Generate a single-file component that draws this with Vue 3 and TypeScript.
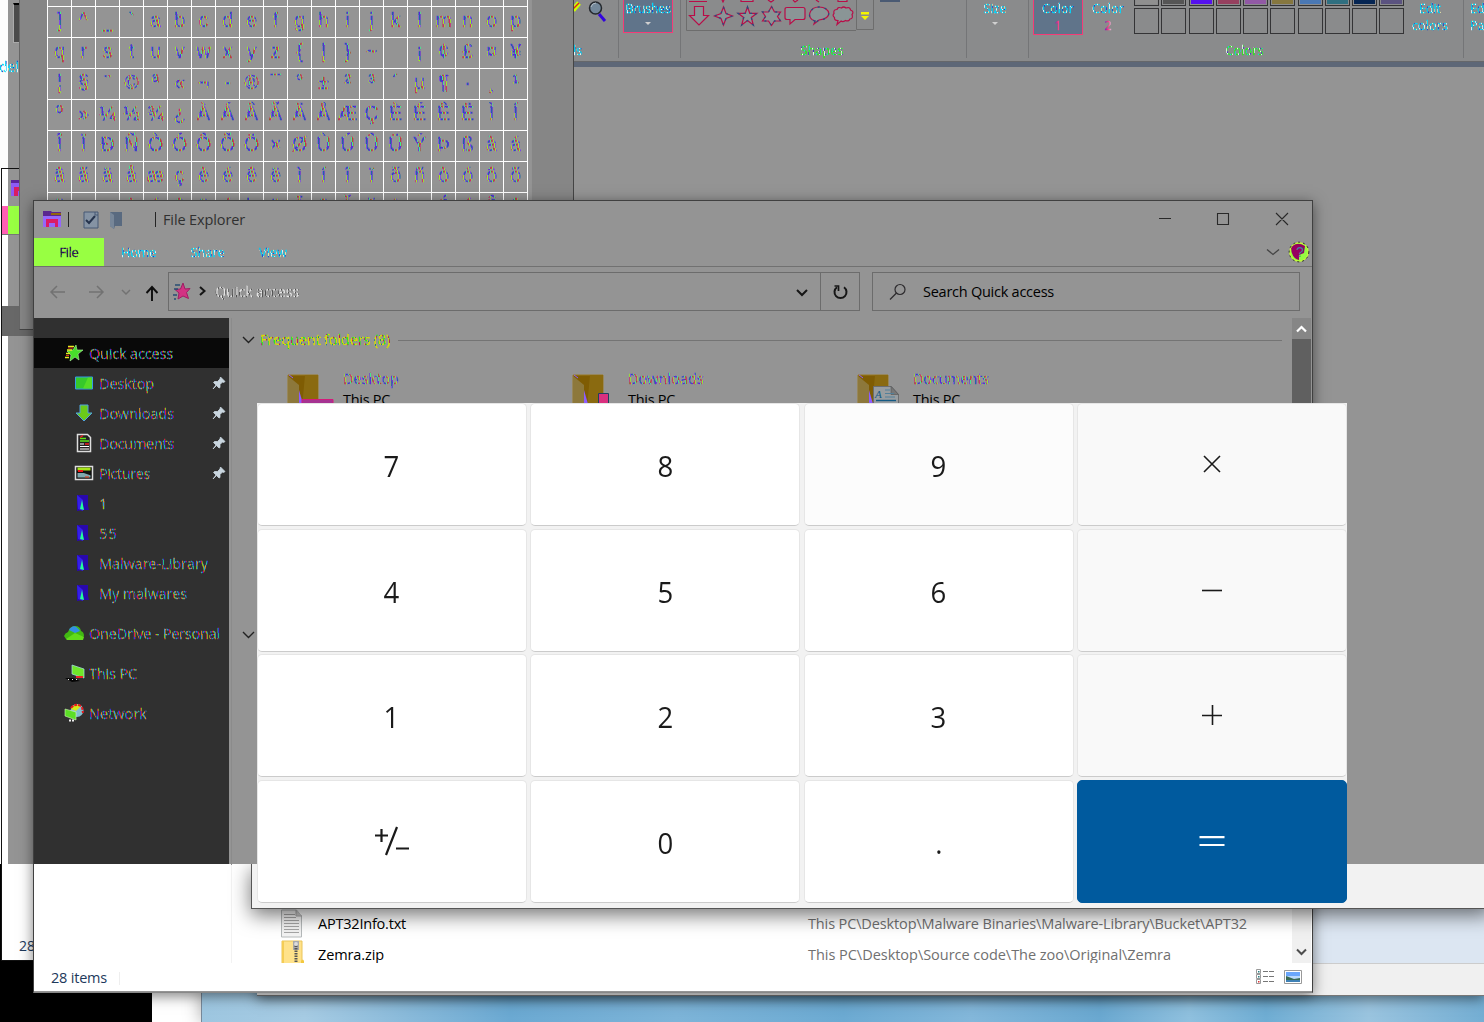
<script setup lang="ts">
import type { Directive } from 'vue'

interface NavItem { label: string; icon: string; width: number; pinned?: boolean; root?: boolean; gap?: boolean }

// Spreads the glyphs of a label so that it fills the given width.
const vFit: Directive<HTMLElement, number> = {
  mounted(el, binding) {
    const n = (el.textContent ?? '').length
    const natural = el.getBoundingClientRect().width
    if (n > 0) el.style.letterSpacing = `${(binding.value - natural) / n}px`
  },
}

const range = (from: number, to: number): number[] => Array.from({ length: to - from + 1 }, (_, i) => from + i)
const glyphs: string[] = [...range(0x5d, 0x7e), ...range(0xa0, 0x109)].map((c) => (c === 0xad ? '-' : String.fromCharCode(c)))

const nav: NavItem[] = [
  { label: 'Quick access', icon: 'star', width: 84, root: true },
  { label: 'Desktop', icon: 'desktop', width: 55, pinned: true },
  { label: 'Downloads', icon: 'down', width: 75, pinned: true },
  { label: 'Documents', icon: 'doc', width: 75, pinned: true },
  { label: 'Pictures', icon: 'pic', width: 51, pinned: true },
  { label: '1', icon: 'folder', width: 8 },
  { label: '55', icon: 'folder', width: 19 },
  { label: 'Malware-Library', icon: 'folder', width: 109 },
  { label: 'My malwares', icon: 'folder', width: 88 },
  { label: 'OneDrive - Personal', icon: 'cloud', width: 131, root: true, gap: true },
  { label: 'This PC', icon: 'pc', width: 48, root: true, gap: true },
  { label: 'Network', icon: 'net', width: 58, root: true, gap: true },
]

const tiles = [
  { name: 'Desktop', kind: 'desktop', width: 56 },
  { name: 'Downloads', kind: 'down', width: 76 },
  { name: 'Documents', kind: 'doc', width: 76 },
]

const files = [
  { name: 'APT32Info.txt', width: 88, path: 'This PC\\Desktop\\Malware Binaries\\Malware-Library\\Bucket\\APT32', pathWidth: 439, zip: false },
  { name: 'Zemra.zip', width: 66, path: 'This PC\\Desktop\\Source code\\The zoo\\Original\\Zemra', pathWidth: 363, zip: true },
]

const palette = ['#8f8f8f', '#555555', '#5511ee', '#96405f', '#9159a5', '#86773f', '#4a78b4', '#2f6f80', '#052553', '#5b5380']

const keys = ['7', '8', '9', '×', '4', '5', '6', '−', '1', '2', '3', '+', '±', '0', '.', '=']
const isOp = (k: string): boolean => ['×', '−', '+'].includes(k)
</script>

<template>
  <div class="screen">
    <div class="sky"></div>
    <div class="black"></div>

    <section class="backleft">
      <span class="ghost noise cool">del</span>
      <i class="device"></i>
    </section>
    <section class="back2">
      <div class="veil"></div>
      <svg class="b2icon" width="10" height="17"><path d="M0 3h10v14H0z" fill="#8d5cf5" /><path d="M0 1h10v3H0z" fill="#5b249c" /><path d="M3 17V8h7v4H7v5z" fill="#d91c62" /></svg>
      <div class="b2tab"></div>
      <div class="b2sel"></div>
      <span class="b2count">28</span>
    </section>

    <section class="paint">
      <div class="ribbon">
        <div class="group g1">
          <div class="gbody">
            <svg width="46" height="24" viewBox="573 0 46 24"><path d="M573 10l6-7" stroke="#ccff00" stroke-width="5" /><path d="M573 9l6-6" stroke="#e02020" stroke-width="1.5" /><path d="M599 14l6 7" stroke="#3305dd" stroke-width="3" /><circle cx="595.500" cy="8" r="6" fill="#73889a" stroke="#24282d" stroke-width="1.5" /><path d="M591 7q1-4 5-4" stroke="#b2bdc5" fill="none" /></svg>
          </div>
          <b class="noise cool lab">ls</b>
        </div>
        <div class="group g2">
          <div class="gbody"><div class="rbtn on"><span v-fit="45" class="noise cool">Brushes</span><i class="tri"></i></div></div>
        </div>
        <div class="group g3">
          <div class="gbody">
            <svg width="285" height="34" viewBox="681 0 285 34" fill="none">
              <path d="M686.500 0v30.500H856" stroke="#6d6d6d" />
              <path d="M856.500 0v29.500h17V0" stroke="#6d6d6d" />
              <g stroke="#b80d48" stroke-width="1.200" fill="#8a9596">
                <path d="M689 1.500h18M722 0l1 2 1-2M741 0v1.500h12V0M768 0l3 2 3-2M793 0l2 2 3-2M816 0l3 2M838 0v1.500h9V0" />
                <path d="M694.500 6.500h9v9h5l-9.500 9.500-9.500-9.500h5z" />
                <path d="M723.500 7l2.500 6.500 6.500 2.500-6.500 2.500-2.500 6.500-2.500-6.500-6.500-2.500 6.500-2.500z" />
                <path d="M747.500 7l2.300 6.300h7l-5.500 4.200 2 7.500-5.800-4.500-5.800 4.500 2-7.500-5.500-4.200h7z" />
                <path d="M771.500 6.500l3 5.500h6l-3 4.500 3 4.500h-6l-3 4.500-3-4.500h-6l3-4.500-3-4.500h6z" />
                <path d="M787 7.500h16q2 0 2 2v8q0 2-2 2h-8l-5 4.500v-4.500h-3q-2 0-2-2v-8q0-2 2-2z" />
                <path d="M815 21c-10-3-5-14 4-14 12 0 14 12 0 13l-5 4z" />
                <path d="M838 20.500q-4 0-3.500-3-2.500-2-.5-4-1-4 3-4 1-3 4.500-1.500 2-2 4.500 0 4-1.500 4.500 2 4 1.500 1.500 4.500 1.500 4-2 4.500-1.500 3-4.500 1.500-3 2-4.500.500l-4 3.500z" />
              </g>
              <g stroke="#255083" stroke-width="1.300" stroke-dasharray="2 5"><path d="M723.500 7l2.500 6.500 6.500 2.500-6.500 2.500-2.500 6.500-2.500-6.500-6.500-2.500 6.500-2.500zM747.500 7l2.300 6.300h7l-5.500 4.200 2 7.500-5.800-4.500-5.800 4.500 2-7.500-5.500-4.200h7zM771.500 6.500l3 5.500h6l-3 4.500 3 4.500h-6l-3 4.500-3-4.500h-6l3-4.500-3-4.500h6zM815 21c-10-3-5-14 4-14 12 0 14 12 0 13l-5 4z" /></g>
              <path d="M861 12h8v2.500h-8zM861 16h8l-4 4z" fill="#f4f400" />
              <path d="M880 0h20v2h-20z" fill="#4a5a73" />
            </svg>
          </div>
          <b v-fit="43" class="noise green lab nudge">Shapes</b>
        </div>
        <div class="group g4">
          <div class="gbody"><div class="rbtn"><span v-fit="23" class="noise cool">Size</span><i class="tri"></i></div></div>
        </div>
        <div class="group g5">
          <div class="gbody">
            <div class="rbtn on tall"><span v-fit="32" class="noise cool">Color</span><span class="noise warm">1</span></div>
            <div class="rbtn tall"><span v-fit="32" class="noise cool">Color</span><span class="noise warm">2</span></div>
            <div class="palette">
              <i v-for="(c, i) in palette" :key="i" class="sw top"><em :style="{ background: c }"></em></i>
              <i v-for="n in 10" :key="'e' + n" class="sw"></i>
            </div>
            <div class="rbtn tall edit"><span v-fit="22" class="noise cool">Edit</span><span v-fit="36" class="noise cool">colors</span></div>
          </div>
          <b v-fit="38" class="noise green lab nudge">Colors</b>
        </div>
        <div class="group g6"><div class="gbody"><div class="rbtn tall left"><span class="noise cool">Edit</span><span class="noise cool">Paint</span></div></div></div>
      </div>
      <div class="strip"></div>
      <div class="canvas"></div>
      <div class="pblue"></div>
      <div class="pstatus"></div>
    </section>

    <section class="charmap">
      <div class="chars"><span v-for="(g, i) in glyphs" :key="i" class="cell"><span class="noise glyph">{{ g }}</span></span></div>
      <div class="chscroll"></div>
    </section>

    <section class="explorer">
      <header class="title">
        <svg class="tico" width="19" height="17" viewBox="0 0 19 17"><path d="M0 3h18v13H0z" fill="#9567fa" /><path d="M0 0h8l1 1h9v4H0z" fill="#5a278e" /><path d="M8 2h10v2H8z" fill="#91650d" /><path d="M3 16V8h12v8h-3v-4H6v4z" fill="#da1b65" /></svg>
        <i class="bar b1"></i>
        <svg class="tdoc" width="16" height="18" viewBox="0 0 16 18"><path d="M1 1h14v16H1z" fill="#8593a4" stroke="#465874" /><path d="M12 1v3h3" stroke="#465874" fill="none" /><path d="M3 9l3 3 6-7" fill="none" stroke="#26344d" stroke-width="2" /></svg>
        <svg class="tfold" width="14" height="18" viewBox="0 0 14 18"><path d="M0 1h12v14H5l-1 3-4-3z" fill="#596a80" /><path d="M0 1l4 3v14l-4-3z" fill="#778698" /></svg>
        <i class="bar b2"></i>
        <span v-fit="82" class="caption">File Explorer</span>
        <svg class="wbtn" width="140" height="20" viewBox="0 0 140 20" fill="none" stroke="#292929" stroke-width="1.100"><path d="M4 9.500h12M62.500 4.500h11v11h-11zM121 4l12 12M133 4l-12 12" /></svg>
      </header>
      <nav class="tabs">
        <span class="tab file"><span v-fit="19" class="noise dark">File</span></span>
        <span v-fit="35" class="noise cool t">Home</span>
        <span v-fit="34" class="noise cool t">Share</span>
        <span v-fit="28" class="noise cool t">View</span>
        <svg class="help" width="46" height="24" viewBox="0 0 46 24"><path d="M1 9.500l6 5 6-5" fill="none" stroke="#444" stroke-width="1.300" /><circle cx="33" cy="12" r="9.500" fill="#95fb42" /><path d="M25 7q6-6 14-1l-1 7-5 2v5q-8-2-8-13z" fill="#970060" /><circle cx="33" cy="12" r="9.300" fill="none" stroke="#d8ff30" /><circle cx="33" cy="12" r="9.800" fill="none" stroke="#22252a" stroke-dasharray="2 3" /><text x="30" y="17" class="q">?</text></svg>
      </nav>
      <div class="address">
        <svg width="134" height="50" viewBox="34 267 134 50" fill="none">
          <path d="M65 292H51m6-6l-6 6 6 6M89 292h14m-6-6l6 6-6 6M122 290l4 4 4-4" stroke="#727272" stroke-width="1.500" />
          <path d="M152 301v-14m-5.500 6l5.500-6 5.500 6" stroke="#0d0d0d" stroke-width="1.900" />
        </svg>
        <div class="abox">
          <svg width="44" height="36" viewBox="169 274 44 36"><path d="M183 283l2 6 5-.5-3.500 4 2 6-5.500-2.500-5 3 1-6-4-3.500 5.500-.5z" fill="#d23283" stroke="#9e1f63" /><path d="M175 285h5M174 289h4M173 295h4M174 299h2" stroke="#274c73" stroke-width="1.300" /><path d="M200 287l4.500 4-4.500 4" fill="none" stroke="#151515" stroke-width="2" /></svg>
          <span v-fit="84" class="noise pale">Quick access</span>
          <svg class="adown" width="14" height="12"><path d="M2 4l5 5 5-5" fill="none" stroke="#161616" stroke-width="2" /></svg>
          <span class="refresh"><svg width="18" height="18" viewBox="0 0 18 18" fill="none" stroke="#161616" stroke-width="2"><path d="M13 4.200a6 6 0 1 1-7 0" /><path d="M3.500 3h4v5" stroke-width="1.700" /></svg></span>
        </div>
        <div class="search">
          <svg width="18" height="18" viewBox="0 0 18 18" fill="none" stroke="#2d2b2e" stroke-width="1.200"><circle cx="11" cy="6.500" r="5" /><path d="M7.500 10L1 16.500" /></svg>
          <span v-fit="131">Search Quick access</span>
        </div>
      </div>
      <div class="body">
        <aside class="side">
          <div v-for="it in nav" :key="it.label" class="row" :class="{ root: it.root, gap: it.gap, sel: it.icon === 'star' }">
            <svg class="ico" width="22" height="22" viewBox="0 0 22 22">
              <g v-if="it.icon === 'star'"><path d="M13 3l1 5 6 0-5 4 1 6-4-3-5 4 1-6-4-4 6-1z" fill="#47df2b" stroke="#b3f7a0" stroke-width=".6" /><path d="M5 4.500h6M4 8h5M3 11.500h4M2 15.500h4" stroke="#e5ed20" stroke-width="1.300" /><path d="M5 6h5M3 13.500h3" stroke="#e43322" /></g>
              <g v-else-if="it.icon === 'desktop'"><path d="M2.500 5h17v12h-17z" fill="#36c82b" stroke="#359be8" /><path d="M10 16.500l5-11h4v11z" fill="#55db26" /></g>
              <g v-else-if="it.icon === 'down'"><path d="M7 3h8v8h4l-8 8-8-8h4z" fill="#6bcb18" stroke="#4ea4df" /></g>
              <g v-else-if="it.icon === 'doc'"><path d="M4.500 2.500h10l3 3v14h-13z" fill="#222" stroke="#ddd" stroke-width="1.500" /><path d="M7 6.500h6M7 9h9" stroke="#5ee218" stroke-width="1.500" /><path d="M7 12h4M7 14.500h9M7 17h9" stroke="#fff" /><path d="M7 5.500l3-2M12 12h4" stroke="#e22" stroke-width="1.500" /></g>
              <g v-else-if="it.icon === 'pic'"><path d="M2.500 4.500h17v13h-17z" fill="#111" stroke="#ddd" stroke-width="1.500" /><path d="M4.500 7h13" stroke="#a8e61b" stroke-width="3" /><path d="M5 9h5" stroke="#f01515" stroke-width="2" /><path d="M4.500 11h13v4.500h-13z" fill="#80a8ae" /><path d="M8 10l10 3.500V10z" fill="#111" /><path d="M12 15h4" stroke="#e31" /></g>
              <g v-else-if="it.icon === 'folder'"><path d="M4 3h11v11l1 4h-5l-7 1z" fill="#2908ac" /><path d="M4 3l6 5v11l-5-2z" fill="#3420e9" /><path d="M9 8l2 10-4-1z" fill="#23ff99" /></g>
              <g v-else-if="it.icon === 'cloud'"><path d="M1 14q1-3 4-4 2-6 7-6 5 0 6 5 3 1 3 5l-2 3H3z" fill="#41b912" /><path d="M6 8q5-8 11 1l-5 2z" fill="#338ee5" /><path d="M3 17l9-6 9 4-1 3H4z" fill="#62dc1b" /></g>
              <g v-else-if="it.icon === 'pc'"><path d="M9 3l12 4v9l-12-4z" fill="#70e72a" stroke="#a9e2ee" stroke-width=".7" /><path d="M13 15h7" stroke="#ef2029" stroke-width="2" /><path d="M2 16h8l7 3-8 1z" fill="#050505" /><path d="M5 17.500h10" stroke="#eee" stroke-dasharray="1 3" /></g>
              <g v-else><circle cx="14" cy="8.500" r="6.500" fill="#85bed0" /><path d="M8 7q4-7 10-3l-5 5z" fill="#d3ed16" /><path d="M8 6q4-5 10-2m1 1l1 6" stroke="#e6191d" stroke-width="2" fill="none" stroke-dasharray="3 1" /><path d="M2 7l11 3v8L2 14z" fill="#5bde26" stroke="#d3f6ba" stroke-width=".6" /><path d="M6 18.500h6" stroke="#eee" stroke-dasharray="2 1" stroke-width="2" /></g>
            </svg>
            <span v-fit="it.width" class="noise neon">{{ it.label }}</span>
            <svg v-if="it.pinned" class="pin" width="14" height="14" viewBox="0 0 14 14"><path d="M8.500 1l4.500 4.500-1.500 1-1-.5-2.500 2.500v3l-1 .5-2.500-2.500L1 13l3-4L1.500 6.500l1-1h3L8 3z" fill="#c9d6df" stroke="#c9d6df" stroke-width=".8" /></svg>
          </div>
        </aside>
        <main class="content">
          <div class="ghead"><svg width="13" height="12"><path d="M1 3l5.500 5.500L12 3" fill="none" stroke="#222" stroke-width="1.400" /></svg><span v-fit="130" class="noise olive">Frequent folders (8)</span><i></i></div>
          <div class="tiles">
            <div v-for="t in tiles" :key="t.name" class="tile">
              <svg width="56" height="46" viewBox="0 0 56 46"><path d="M1 2h30v44H1z" fill="#7f5c03" stroke="#9a7a24" /><path d="M18 2h13v44H14z" fill="#8a6a10" /><path d="M1 3l11 9v34H1z" fill="#8d783b" /><path d="M2 2l4 3" stroke="#8d5cff" /><path d="M12 17l4 14v15h-4z" fill="#8d5cff" />
                <path v-if="t.kind === 'desktop'" d="M15 26.500h31V46H15z" fill="#a63392" stroke="#d5197b" />
                <path v-else-if="t.kind === 'down'" d="M26.500 20.500h10V46h-10z" fill="#d9307f" stroke="#20405f" />
                <g v-else><path d="M16.500 13.500h18l7 8V46h-25z" fill="#989da0" stroke="#6a6d70" /><path d="M34 13.500v8h7.500z" fill="#777" stroke="#555" stroke-width=".6" /><path d="M28 17h5M28 20.500h9M28 24h10" stroke="#53809a" /><path d="M19 27.500h20" stroke="#145a84" stroke-width="1.400" /><path d="M31 31h9" stroke="#f0387a" stroke-width="2" /><text x="18" y="25" class="aa">A</text></g>
              </svg>
              <div class="tt"><span v-fit="t.width" class="noise tname">{{ t.name }}</span><br /><span v-fit="47" class="sub">This PC</span></div>
            </div>
          </div>
          <div class="ghead g2nd"><svg width="13" height="12"><path d="M1 3l5.500 5.500L12 3" fill="none" stroke="#222" stroke-width="1.400" /></svg></div>
          <div class="spacer"></div>
          <div v-for="f in files" :key="f.name" class="frow">
            <svg v-if="!f.zip" width="24" height="29" viewBox="0 0 24 29"><path d="M1.500 1h15l5 6v21h-20z" fill="#f3f3f3" stroke="#b5b9ba" /><path d="M16 1v6h6" fill="#ccc" stroke="#aaa" /><path d="M4 5.500h11M4 8.500h12M4 11.500h15M4 14.500h15M4 17.500h15M4 20.500h15M4 23.500h15" stroke="#a5a5a5" /></svg>
            <svg v-else width="24" height="29" viewBox="0 0 24 29"><path d="M2 1h20v28H2z" fill="#ffe28a" stroke="#eac55a" /><path d="M2 1h2v28H2z" fill="#f5cd55" /><path d="M13 1h6v9h-6z" fill="#aaa" /><path d="M16 3v26" stroke="#555" stroke-width="3" stroke-dasharray="1.500 1" /><circle cx="16" cy="4" r="2" fill="#ddd" /><path d="M21 29v-8q2-3 3 0v8z" fill="#f3c83f" /></svg>
            <span class="fname"><span v-fit="f.width">{{ f.name }}</span></span>
            <span v-fit="f.pathWidth" class="path">{{ f.path }}</span>
          </div>
        </main>
        <div class="scroll">
          <div class="sup"><svg width="14" height="10"><path d="M3 7.500L7.500 3 12 7.500" fill="none" stroke="#fff" stroke-width="2.200" /></svg></div>
          <div class="thumb"></div>
          <div class="sdown"><svg width="14" height="10"><path d="M3 2.500L7.500 7 12 2.500" fill="none" stroke="#4d4d4d" stroke-width="2" /></svg></div>
        </div>
      </div>
      <footer class="status">
        <span v-fit="56">28 items</span><i></i>
        <svg width="48" height="18" viewBox="0 0 48 18"><path d="M1.500 1.500h4v4h-4zM1.500 6.500h4v4h-4zM1.500 11.500h4v4h-4z" fill="#fff" stroke="#999" /><path d="M3 3h1.500v1.500H3zM3 8h1.500v1.500H3z" fill="#277f82" /><path d="M3 13h1.500v1.500H3z" fill="#d33" /><path d="M8 3.500h11M8 8.500h11M8 13.500h11" stroke="#777" stroke-dasharray="5 1" /><path d="M29.500 2.500h17v13h-17z" fill="#fff" stroke="#999" /><path d="M31 4h14v5H31z" fill="#6aa6fb" /><path d="M31 8h14v6H31z" fill="#b9d8fc" /><path d="M31 8l8 3 6-1v2l-14 1z" fill="#3a6a53" /><path d="M31 12h14v2H31z" fill="#3f81b5" /></svg>
      </footer>
    </section>

    <section class="calcbase"></section>
    <section class="calc">
      <button v-for="(k, i) in keys" :key="k" type="button" :class="{ op: isOp(k), eq: k === '=', soft: i === 2, first: i % 4 === 0 }">
        <svg v-if="k === '×'" class="up" width="20" height="20"><path d="M2 2l16 16M18 2L2 18" /></svg>
        <svg v-else-if="k === '−'" class="up" width="22" height="20"><path d="M1 10.500h20" /></svg>
        <svg v-else-if="k === '+'" class="up" width="22" height="22"><path d="M1 11.500h20M11.500 1v20" /></svg>
        <svg v-else-if="k === '±'" class="pm" width="36" height="30"><path d="M1 9.500h13M7.500 3v13M12 29L23 1M22 22.500h13" /></svg>
        <svg v-else-if="k === '='" class="eqi" width="26" height="12"><path d="M.5 2.200h25M.5 10h25" /></svg>
        <span v-else>{{ k }}</span>
      </button>
    </section>
  </div>
</template>

<style>
html, body { margin: 0; background: #fff; overflow: hidden; }
</style>

<style scoped>
.screen { position: relative; width: 1484px; height: 1022px; overflow: hidden; background: #fff; font: 15px/20px "Open Sans", "Noto Sans", sans-serif; color: #000; }
.screen *, .screen { box-sizing: border-box; }
svg { display: block; flex: none; }
section { position: absolute; }
i, em, b { font-style: normal; font-weight: 400; }
span { white-space: nowrap; }
.noise { display: inline-block; color: transparent; background-clip: text; -webkit-background-clip: text; -webkit-text-stroke: .35px transparent;
  background-image: repeating-linear-gradient(78deg, #5b20e0 0 1.300px, #3df08e 1.300px 2.200px, #a8522a 2.200px 3px, #d02470 3px 4px, #9cf020 4px 5px, #7a40f0 5px 6px, #1f68a0 6px 7px); }
.cool { background-image: repeating-linear-gradient(78deg, #00d8ff 0 2px, #f0f8fa 2px 3px, #00c8f0 3px 4.500px, #2838d0 4.500px 5px, #e8e8a8 5px 5.600px); }
.green { background-image: repeating-linear-gradient(78deg, #20f010 0 1.700px, #f4fff4 1.700px 2.700px, #3d20d0 2.700px 3.200px, #28f030 3.200px 4.700px, #10d8e0 4.700px 5.500px); }
.warm { background-image: linear-gradient(90deg, #4a18d8, #ff2f7c, #e0e0f0); }
.dark { background-image: repeating-linear-gradient(68deg, #1f1465 0 2px, #7a204d 2px 3px, #1e7a50 3px 4px, #24242c 4px 5px); }
.pale { background-image: repeating-linear-gradient(84deg, #e8e8e8 0 1.300px, #4e4e4e 1.300px 2.300px, #bdbdbd 2.300px 3.300px); }
.olive { background-image: repeating-linear-gradient(78deg, #d8e000 0 2px, #c01058 2px 2.700px, #20f018 2.700px 4px, #d8d800 4px 5.600px, #107898 5.600px 6px); }
.neon { background-image: repeating-linear-gradient(78deg, #e09a28 0 1px, #4a3090 1px 2px, #22c890 2px 3px, #3a30e8 3px 4px, #dd2044 4px 5px, #8cd420 5px 6px, #3a98e8 6px 7px); }

.sky { position: absolute; left: 201px; top: 990px; width: 1283px; height: 32px; border-left: 1px solid #789; background: linear-gradient(90deg, #9dc6e0 0, #a6cbe3 8%, #8dbcdb 15%, #6ba9d2 24%, #7db4d8 37%, #6caad2 50%, #83b7da 60%, #6aa8d0 70%, #8fc0de 77%, #6fadd3 83%, #9ac4df 91%, #74aed3 100%); box-shadow: 0 0 18px rgba(0, 0, 0, .35); }
.black { position: absolute; left: 0; top: 864px; width: 152px; height: 158px; background: #000; }
.backleft { left: 0; top: 0; width: 20px; height: 864px; background: linear-gradient(90deg, #fcfcfc 8px, #949494 8px); overflow: hidden; }
.ghost { margin: 57px 0 0 -1px; font-size: 14px; }
.device { position: absolute; left: 13px; top: 3px; width: 8px; height: 40px; background: #4a4a4a; border: 1px solid #aaa; border-top: 2px solid #000; }
.back2 { left: 1px; top: 168px; width: 60px; height: 793px; border: 1px solid #111; background: #fff; }
.veil { position: absolute; left: 6px; top: 0; width: 54px; height: 695px; background: #949494; }
.b2icon { position: absolute; left: 9px; top: 10px; }
.b2tab { position: absolute; left: 0; top: 37px; width: 60px; height: 29px; background: linear-gradient(90deg, #ff5fb4 6px, #98ff42 6px); border-bottom: 1px solid #777; }
.b2sel { position: absolute; left: 0; top: 137px; width: 60px; height: 30px; background: #686868; }
.b2count { position: absolute; left: 17px; top: 767px; font-size: 14px; color: #1e395b; }

.paint { left: 257px; top: 0; padding-left: 316px; width: 1227px; height: 996px; background: #949494; border-bottom: 1px solid #777; display: flex; flex-direction: column; box-shadow: 0 3px 12px rgba(0, 0, 0, .5); }
.ribbon { height: 61px; flex: none; display: flex; background: #8a8b8c; overflow: hidden; font-size: 12.500px; line-height: 17px; }
.group { height: 58px; flex: none; position: relative; display: flex; flex-direction: column; align-items: center; border-right: 1px solid #747577; }
.gbody { height: 42px; flex: none; display: flex; align-items: flex-start; width: 100%; }
.lab { font-size: 12.500px; line-height: 17px; }
.nudge { margin-right: 3px; }
.g1 { width: 46px; align-items: flex-start; } .g2 { width: 62px; } .g3 { width: 286px; } .g4 { width: 62px; } .g5 { width: 435px; } .g6 { width: 40px; border: 0; }
.rbtn { width: 50px; height: 33px; display: flex; flex-direction: column; align-items: center; flex: none; }
.g2 .rbtn { margin-left: 4px; } .g4 .rbtn { margin-left: 3px; }
.rbtn.on { background: #60748a; border: 1px solid #f53b77; border-top: 0; }
.rbtn.tall { height: 35px; }
.g5 .rbtn:first-child { margin-left: 4px; }
.g5 .edit { margin: 0 8px 0 auto; }
.rbtn.left { align-items: flex-start; padding-left: 6px; }
.tri { margin-top: 5px; border: 3px solid transparent; border-top-color: #d0d0d0; border-bottom: 0; }
.palette { display: grid; grid-template-columns: repeat(10, 25px); column-gap: 2.250px; row-gap: 2px; margin-left: 1px; }
.sw { height: 26px; border: 1px solid #343436; }
.sw.top { height: 6px; border-top: 0; padding: 0 1px 1px; }
.sw em { display: block; height: 4px; }
.strip { height: 6px; flex: none; background: #5d6777; border-top: 1px solid #65676a; }
.canvas { height: 797px; flex: none; }
.pblue { height: 100px; flex: none; background: #dce6f2; border-bottom: 1px solid #ccc; }
.pstatus { flex: 1; background: #f0f0f0; margin-left: -316px; }

.charmap { left: 19px; top: -3px; width: 555px; height: 333px; background: #868686; border: 1px solid #454545; border-top: 0; border-left-color: #666; display: flex; overflow: hidden; }
.chars { margin: 3px 0 0 27px; padding-top: 6px; width: 481px; flex: none; display: grid; grid-template-columns: repeat(20, 24px); grid-auto-rows: 31px; border-left: 1px solid #fff; align-content: start; background: repeating-linear-gradient(90deg, #949494 0 23px, #fff 23px 24px); }
.cell { background: #949494; border: 1px solid #fff; border-width: 1px 1px 0 0; display: flex; justify-content: center; font: 20px/27px "Liberation Sans", Arial, sans-serif; }
.glyph { height: 30px; }
.chscroll { width: 4px; border-right: 1px solid #939393; background: #949494; }

.explorer { left: 33px; top: 200px; width: 1280px; height: 793px; border: 1px solid #404040; border-bottom-color: #888; background: #949494; display: flex; flex-direction: column; box-shadow: 0 3px 13px rgba(0, 0, 0, .5); }
.title { height: 37px; display: flex; align-items: center; flex: none; }
.tico { margin-left: 9px; } .bar { width: 1px; height: 15px; background: #242424; } .b1 { margin-left: 6px; }
.tdoc { margin-left: 14px; } .tfold { margin-left: 11px; } .b2 { margin-left: 31px; }
.caption { margin-left: 7px; color: #303030; font-size: 14.500px; }
.wbtn { margin: -2px 17px 0 auto; }
.tabs { height: 29px; flex: none; display: flex; align-items: center; border-bottom: 1px solid #717171; font-size: 13px; }
.file { width: 70px; align-self: stretch; background: #98ff42; display: flex; align-items: center; justify-content: center; margin-right: 17px; }
.t { margin-right: 34.500px; }
.help { margin-left: auto; }
.q { font: 14px "Liberation Sans", sans-serif; fill: #44809c; }
.aa { font: italic 11px "Liberation Serif", serif; fill: #145a84; }
.address { height: 51px; flex: none; display: flex; }
.abox { margin-top: 5px; width: 692px; height: 39px; border: 1px solid #6c6c6c; display: flex; align-items: center; font-size: 14.500px; }
.abox > span:first-of-type { margin-left: 2px; }
.adown { margin-left: auto; margin-right: 11px; }
.refresh { width: 39px; align-self: stretch; border-left: 1px solid #6c6c6c; display: flex; align-items: center; justify-content: center; }
.search { margin: 5px 0 0 12px; width: 428px; height: 39px; border: 1px solid #6c6c6c; display: flex; align-items: center; padding-left: 16px; font-size: 14.500px; }
.search span { margin-left: 16px; }
.body { height: 645px; flex: none; display: flex; background: linear-gradient(#949494 546px, #fff 546px); overflow: hidden; }
.side { width: 195px; padding-top: 20px; height: 546px; background: #303030; flex: none; }
.row { height: 30px; display: flex; align-items: center; padding: 2px 0 0 39px; font-size: 14.500px; }
.row .ico, .pin { position: relative; top: -1px; }
.row.root { padding-left: 29px; } .row.gap { margin-top: 10px; }
.row.sel { background: #090909; }
.row .ico { margin-right: 4px; }
.pin { margin-left: auto; margin-right: 3px; }
.content { margin-left: 2px; width: 1061px; flex: none; border-left: 1px solid #8b8b8b; border-image: linear-gradient(#8b8b8b 546px, #f2f2f2 546px) 1; display: flex; flex-direction: column; }
.ghead { height: 44px; flex: none; display: flex; align-items: center; padding-left: 10px; }
.g2nd { padding-top: 2px; }
.ghead span { margin-left: 5px; position: relative; top: -1px; } .ghead i { height: 1px; background: #747474; flex: 1; margin: 0 10px 0 8px; }
.tiles { height: 250px; flex: none; display: flex; padding: 11px 0 0 55px; }
.tile { width: 285px; display: flex; font-size: 14.500px; }
.tt { margin-top: -4px; line-height: 20px; }
.sub { position: relative; top: 1px; }
.spacer { height: 252px; flex: none; }
.frow { height: 31px; flex: none; display: flex; align-items: center; padding-left: 48px; font-size: 14.500px; }
.fname { margin-left: 14px; width: 490px; }
.path { color: #707070; }
.scroll { width: 19px; margin-left: 0; display: flex; flex-direction: column; background: #f0f0f0; flex: none; }
.sup { height: 21px; background: #868686; display: flex; align-items: center; padding-left: 2px; }
.thumb { height: 525px; background: #606060; }
.sdown { margin-top: auto; height: 22px; padding: 6px 0 0 2px; }
.status { height: 28px; background: #fff; display: flex; align-items: center; padding: 2px 0 0 17px; font-size: 14.500px; color: #1e395b; }
.status i { width: 1px; height: 13px; background: #eee; margin-left: 12px; }
.status svg { margin: -2px 9px 0 auto; }

.calcbase { left: 251px; top: 864px; width: 1240px; height: 45px; background: #f2f2f2; border-left: 1px solid #555; border-bottom: 1px solid #555; box-shadow: 0 6px 20px rgba(0, 0, 0, .55); clip-path: inset(0 0 -40px -40px); }
.calc { left: 257px; top: 403px; width: 1090px; height: 505px; background: #f2f2f2; padding-bottom: 5px; display: grid; grid-template-columns: repeat(4, 1fr); grid-template-rows: repeat(4, 1fr); gap: 2.400px 3.300px; }
button { margin: 0; padding: 0; border: 1px solid #e6e6e6; border-bottom-color: #cbcbcb; border-radius: 5px; background: #fff; font: 29px/40px "Open Sans", "Noto Sans", sans-serif; color: #1a1a1a; display: flex; align-items: center; justify-content: center; }
button span { position: relative; top: 1.500px; transform: scaleX(.95); }
button.first span { left: -1px; }
button.op { background: #f9f9f9; } button.soft { background: #fcfcfc; }
button.eq { background: #005a9e; border-color: #005a9e; }
button svg { fill: none; stroke: #1a1a1a; stroke-width: 1.600; }
.up { margin-bottom: 1px; } .pm { margin-bottom: 1px; stroke-width: 2.200; }
.eqi { stroke: #fff; stroke-width: 2.200; }
</style>
